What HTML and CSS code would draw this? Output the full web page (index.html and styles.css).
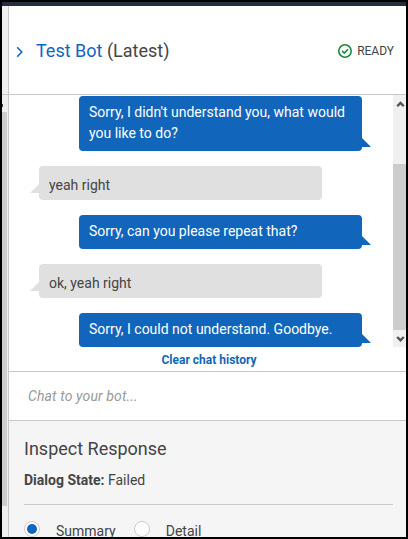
FILE: index.html
```html
<!DOCTYPE html>
<html lang="en">
<head>
<meta charset="utf-8">
<title>Test Bot</title>
<link rel="stylesheet" href="styles.css">
</head>
<body>
<div class="window">
  <div class="topbar"></div>
  <div class="main">
    <div class="rail">
      <div class="rail-head"></div>
      <div class="rail-track"><span class="rail-mark"></span><div class="rail-thumb"></div></div>
    </div>
    <div class="panel">
      <header class="header">
        <svg class="chevron" width="8" height="12" viewBox="0 0 8 12"><path d="M1.2 1.2 5.8 6 1.2 10.8"/></svg>
        <h1 class="title"><span class="bot">Test Bot</span> (Latest)</h1>
        <svg class="check" width="14" height="14" viewBox="0 0 14 14"><circle cx="7" cy="7" r="6.2"/><path d="M4.1 6.9 6.3 9 10 5.2"/></svg>
        <span class="status">READY</span>
      </header>
      <div class="chat">
        <div class="messages">
          <div class="bubble bot-msg">Sorry, I didn't understand you, what would<br>you like to do?</div>
          <div class="bubble user-msg">yeah right</div>
          <div class="bubble bot-msg">Sorry, can you please repeat that?</div>
          <div class="bubble user-msg">ok, yeah right</div>
          <div class="bubble bot-msg">Sorry, I could not understand. Goodbye.</div>
        </div>
        <div class="scrollbar">
          <svg class="arrow" width="13" height="17" viewBox="0 0 13 17"><path d="M4.2 11.2 7.5 7.9 10.8 11.2"/></svg>
          <div class="thumb"></div>
          <svg class="arrow" width="13" height="17" viewBox="0 0 13 17"><path d="M4.2 7 7.5 10.3 10.8 7"/></svg>
        </div>
      </div>
      <div class="clear"><span>Clear chat history</span></div>
      <div class="input"><span>Chat to your bot...</span></div>
      <section class="inspect">
        <h2>Inspect Response</h2>
        <p class="state"><b>Dialog State:</b> Failed</p>
        <div class="rule"></div>
        <div class="options">
          <span class="radio on"></span><span class="label">Summary</span>
          <span class="radio"></span><span class="label">Detail</span>
        </div>
      </section>
    </div>
  </div>
</div>
</body>
</html>
```
FILE: styles.css
```css
* { box-sizing: border-box; }
body {
  margin: 0;
  font-family: Roboto, "Liberation Sans", sans-serif;
  font-size: 14px;
  color: #444;
}
.window {
  width: 408px;
  height: 539px;
  border: 2px solid #000;
  overflow: hidden;
  background: #fff;
  display: flex;
  flex-direction: column;
}
.topbar { height: 4px; flex: none; background: #232f3e; }
.main { flex: 1; display: flex; min-height: 0; }
.rail {
  width: 7px;
  flex: none;
  border-right: 1px solid #c8c8c8;
  background: #f0f0f0;
}
.rail-head { height: 89px; border-bottom: 1px solid #c8c8c8; }
.rail-track { padding-top: 9px; display: flex; flex-direction: column; }
.rail-mark { width: 1px; height: 3px; background: #444; }
.rail-thumb { width: 5px; height: 394px; margin-top: 5px; background: #cdcdcd; }
.panel { flex: 1; min-width: 0; display: flex; flex-direction: column; }
.header {
  height: 89px;
  flex: none;
  border-bottom: 1px solid #c8c8c8;
  display: flex;
  align-items: center;
  padding: 2px 12px 0 7px;
}
.chevron { margin-top: 2px; }
.chevron path { fill: none; stroke: #1166bb; stroke-width: 1.6; }
.title { margin: 0 auto 0 12px; font-size: 18px; font-weight: 400; line-height: 24px; }
.bot { color: #1166bb; }
.check { margin-right: 5px; }
.check circle, .check path { fill: none; stroke: #1d8b3c; stroke-width: 1.6; }
.status { font-size: 12px; }
.chat { height: 252px; flex: none; display: flex; }
.messages {
  flex: 1;
  padding: 1px 0 0 30px;
  display: flex;
  flex-direction: column;
  gap: 15px;
}
.bubble {
  position: relative;
  width: 283px;
  padding: 6px 0 7px 10px;
  border-radius: 4px;
  line-height: 21px;
  white-space: nowrap;
}
.bot-msg { margin-left: 40px; background: #1166bb; color: #fff; }
.user-msg { padding: 9px 0 4px 10px; background: #e0e0e0; }
.bubble::after {
  content: "";
  position: absolute;
  bottom: 4px;
  width: 9px;
  height: 9px;
}
.bot-msg::after { right: -9px; background: #1166bb; clip-path: polygon(0 0, 100% 100%, 0 100%); }
.user-msg::after { left: -9px; bottom: 7px; background: #e0e0e0; clip-path: polygon(100% 0, 100% 100%, 0 100%); }
.scrollbar {
  width: 13px;
  background: #f0f0f0;
  display: flex;
  flex-direction: column;
}
.arrow { flex: none; }
.arrow path { fill: none; stroke: #505050; stroke-width: 2.3; }
.thumb { height: 166px; margin-top: 52px; background: #cdcdcd; }
.clear {
  height: 25px;
  flex: none;
  border-bottom: 1px solid #c8c8c8;
  text-align: center;
  font-size: 12px;
  font-weight: 700;
  line-height: 26px;
  color: #1166bb;
  padding-left: 3px;
}
.input {
  height: 49px;
  flex: none;
  border-bottom: 1px solid #c8c8c8;
  padding-left: 19px;
  font-style: italic;
  letter-spacing: 0.13px;
  line-height: 49px;
  color: #999;
}
.inspect { flex: 1; min-height: 0; background: #f5f5f5; padding: 16px 13px 0 15px; }
h2 { margin: 0; font-size: 18px; font-weight: 400; line-height: 24px; }
.state { margin: 9px 0 0; line-height: 20px; }
.rule { height: 1px; margin-top: 14px; background: #c8c8c8; }
.options { display: flex; align-items: flex-start; padding-top: 16px; }
.radio {
  width: 16px;
  height: 16px;
  border: 1px solid #ccc;
  border-radius: 50%;
  background: #fff;
  display: flex;
  align-items: center;
  justify-content: center;
}
.on::before { content: ""; width: 10px; height: 10px; border-radius: 50%; background: #1166bb; }
.label { margin: 0 18px 0 16px; line-height: 20px; }
```
